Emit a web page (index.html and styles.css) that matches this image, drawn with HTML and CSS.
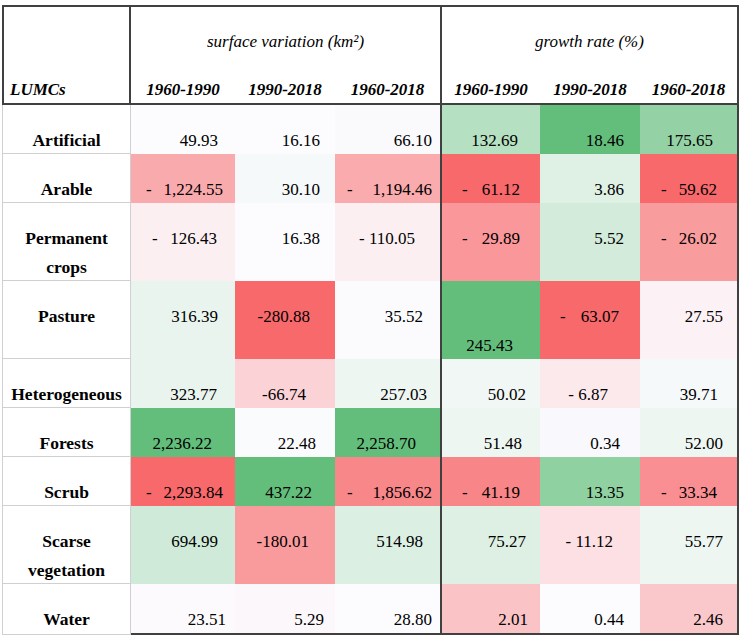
FILE: index.html
```html
<!DOCTYPE html>
<html lang="en">
<head>
<meta charset="utf-8">
<title>LUMCs</title>
<link rel="stylesheet" href="styles.css">
</head>
<body>
<div class="sheet">
  <div class="h0">LUMCs</div>
  <div class="grp">surface variation (km²)</div>
  <div class="grp g2">growth rate (%)</div>
  <div class="yr">1960-1990</div>
  <div class="yr">1990-2018</div>
  <div class="yr">1960-2018</div>
  <div class="yr g2">1960-1990</div>
  <div class="yr">1990-2018</div>
  <div class="yr">1960-2018</div>

  <div class="lab">Artificial</div>
  <div class="n pr17" style="background:#FCFCFF">49.93</div>
  <div class="n pr15" style="background:#FCFCFF">16.16</div>
  <div class="n pr8" style="background:#FAFAFD">66.10</div>
  <div class="n g2 pr22" style="background:#B6E0C2">132.69</div>
  <div class="n pr16" style="background:#63BE7B">18.46</div>
  <div class="n pr24" style="background:#94D2A5">175.65</div>

  <div class="lab">Arable</div>
  <div class="n acc m15 pr12" style="background:#F9AAAD"><span>-</span><span>1,224.55</span></div>
  <div class="n pr15" style="background:#F6F9FA">30.10</div>
  <div class="n acc m12 pr8" style="background:#F9ABAD"><span>-</span><span>1,194.46</span></div>
  <div class="n g2 acc m22 pr20" style="background:#F8696B"><span>-</span><span>61.12</span></div>
  <div class="n pr16" style="background:#DFF0E5">3.86</div>
  <div class="n acc m21 pr20" style="background:#F8696B"><span>-</span><span>59.62</span></div>

  <div class="lab">Permanent crops</div>
  <div class="n acc m21 pr18" style="background:#FBEFF2"><span>-</span><span>126.43</span></div>
  <div class="n pr15" style="background:#FCFCFF">16.38</div>
  <div class="n pr25" style="background:#FBEFF2">- 110.05</div>
  <div class="n g2 acc m22 pr20" style="background:#F9979A"><span>-</span><span>29.89</span></div>
  <div class="n pr16" style="background:#D2EBDA">5.52</div>
  <div class="n acc m21 pr20" style="background:#F99C9E"><span>-</span><span>26.02</span></div>

  <div class="lab">Pasture</div>
  <div class="n pr17" style="background:#E9F4EF">316.39</div>
  <div class="n pr25" style="background:#F8696B">-280.88</div>
  <div class="n pr17" style="background:#FBFBFE">35.52</div>
  <div class="n g2 pr27 low" style="background:#63BE7B">245.43</div>
  <div class="n acc m22 pr21" style="background:#F8696B"><span>-</span><span>63.07</span></div>
  <div class="n pr14" style="background:#FCF1F4">27.55</div>

  <div class="lab">Heterogeneous</div>
  <div class="n pr18" style="background:#E9F4EE">323.77</div>
  <div class="n pr29" style="background:#FBD2D6">-66.74</div>
  <div class="n pr13" style="background:#EEF6F2">257.03</div>
  <div class="n g2 pr14" style="background:#F0F7F4">50.02</div>
  <div class="n pr32" style="background:#FCE9EC">- 6.87</div>
  <div class="n pr19" style="background:#F6F9FA">39.71</div>

  <div class="lab">Forests</div>
  <div class="n pr23" style="background:#63BE7B">2,236.22</div>
  <div class="n pr19" style="background:#FAFBFD">22.48</div>
  <div class="n pr24" style="background:#63BE7B">2,258.70</div>
  <div class="n g2 pr18" style="background:#EEF6F2">51.48</div>
  <div class="n pr20" style="background:#F9F9FD">0.34</div>
  <div class="n pr14" style="background:#EEF6F2">52.00</div>

  <div class="lab">Scrub</div>
  <div class="n acc m15 pr12" style="background:#F8696B"><span>-</span><span>2,293.84</span></div>
  <div class="n pr23" style="background:#63BE7B">437.22</div>
  <div class="n acc m12 pr8" style="background:#F8878A"><span>-</span><span>1,856.62</span></div>
  <div class="n g2 acc m22 pr20" style="background:#F88587"><span>-</span><span>41.19</span></div>
  <div class="n pr16" style="background:#8FD1A0">13.35</div>
  <div class="n acc m21 pr20" style="background:#F98F92"><span>-</span><span>33.34</span></div>

  <div class="lab">Scarse vegetation</div>
  <div class="n pr17" style="background:#CFEAD8">694.99</div>
  <div class="n pr26" style="background:#F99B9D">-180.01</div>
  <div class="n pr17" style="background:#DCEFE3">514.98</div>
  <div class="n g2 pr14" style="background:#DEF0E4">75.27</div>
  <div class="n pr27" style="background:#FCE0E3">- 11.12</div>
  <div class="n pr14" style="background:#EEF6F2">55.77</div>

  <div class="lab">Water</div>
  <div class="n last pr9" style="background:#FCFAFD">23.51</div>
  <div class="n last pr11" style="background:#FCF7FA">5.29</div>
  <div class="n last pr8" style="background:#FCFCFF">28.80</div>
  <div class="n last g2 pr12" style="background:#FAC3C6">2.01</div>
  <div class="n last pr16" style="background:#FCFCFF">0.44</div>
  <div class="n last pr14" style="background:#FAC8CB">2.46</div>
</div>
</body>
</html>
```

FILE: styles.css
```css
* { box-sizing: border-box; }
html, body { margin: 0; padding: 0; background: #fff; }
body {
  font-family: "Liberation Serif", "Times New Roman", serif;
  color: #000;
  font-size: 17px;
}
.sheet {
  display: grid;
  width: max-content;
  grid-template-columns: 129px 104px 100px 105px 100px 100px 97px;
  grid-template-rows: 62px 36px 49px 49px 78px 78px 49px 49px 49px 78px 51px;
  margin: 5px 0 0 2px;
  border-top: 2px solid #404040;
  border-right: 2px solid #404040;
}
.h0 {
  grid-row: 1 / 3;
  border-left: 2px solid #404040;
  border-right: 2px solid #404040;
  border-bottom: 2px solid #404040;
  display: flex;
  align-items: flex-end;
  padding: 0 0 3px 6px;
  font-weight: bold;
  font-style: italic;
}
.grp {
  grid-column: 2 / 5;
  text-align: center;
  font-style: italic;
  padding-top: 25px;
}
.grp.g2 {
  grid-column: 5 / 8;
  border-left: 2px solid #404040;
}
.yr {
  display: flex;
  align-items: flex-end;
  justify-content: center;
  padding-bottom: 3px;
  font-weight: bold;
  font-style: italic;
  border-bottom: 2px solid #404040;
}
.yr.g2 { border-left: 2px solid #404040; }

.lab {
  border-left: 1px solid #d0d0d0;
  border-right: 1px solid #d0d0d0;
  border-bottom: 1px solid #d0d0d0;
  text-align: center;
  font-weight: bold;
  font-size: 17.5px;
  line-height: 29px;
  padding: 21px 4px 0;
}
.n {
  display: flex;
  justify-content: flex-end;
  align-items: flex-start;
  line-height: 29px;
  padding-top: 21px;
  white-space: nowrap;
}
.n.acc { justify-content: space-between; }
.n.g2 { border-left: 2px solid #404040; }
.n.low { padding-top: 50px; }
.n.last { border-bottom: 2px solid #404040; }

.m12 { padding-left: 12px; }
.m15 { padding-left: 15px; }
.m21 { padding-left: 21px; }
.m22 { padding-left: 20px; }

.pr8 { padding-right: 8px; }
.pr9 { padding-right: 9px; }
.pr11 { padding-right: 11px; }
.pr12 { padding-right: 12px; }
.pr13 { padding-right: 13px; }
.pr14 { padding-right: 14px; }
.pr15 { padding-right: 15px; }
.pr16 { padding-right: 16px; }
.pr17 { padding-right: 17px; }
.pr18 { padding-right: 18px; }
.pr19 { padding-right: 19px; }
.pr20 { padding-right: 20px; }
.pr21 { padding-right: 21px; }
.pr22 { padding-right: 22px; }
.pr23 { padding-right: 23px; }
.pr24 { padding-right: 24px; }
.pr25 { padding-right: 25px; }
.pr26 { padding-right: 26px; }
.pr27 { padding-right: 27px; }
.pr29 { padding-right: 29px; }
.pr32 { padding-right: 32px; }
```
